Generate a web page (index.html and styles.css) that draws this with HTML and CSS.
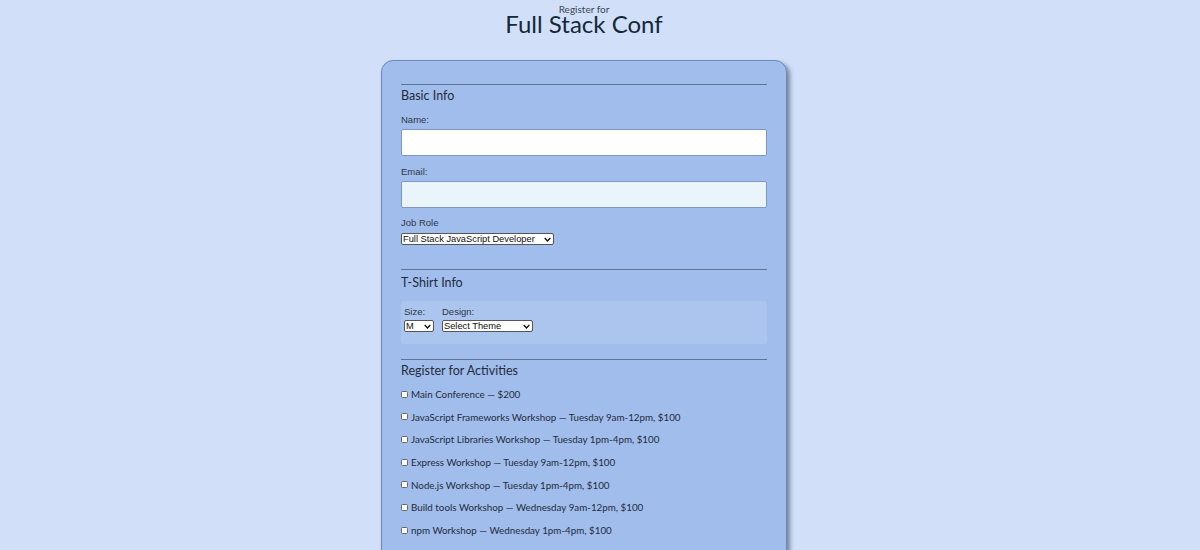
FILE: index.html
```html
<!DOCTYPE html>
<html>
<head>
<meta charset="utf-8">
<link rel="stylesheet" href="styles.css">
</head>
<body>
<header class="header">
  <div class="pre">Register for</div>
  <h1 class="title">Full Stack Conf</h1>
</header>
<form class="card">
  <fieldset class="section">
    <h2 class="legend">Basic Info</h2>
    <label class="lbl" for="name">Name:</label>
    <input class="text" id="name" type="text">
    <label class="lbl" for="mail">Email:</label>
    <input class="text email" id="mail" type="email">
    <label class="lbl" for="title">Job Role</label>
    <span class="selwrap role"><select class="sel" id="title"><option>Full Stack JavaScript Developer</option></select><svg class="chev" viewBox="0 0 10 6"><path d="M1 1l4 4 4-4" fill="none" stroke="#111" stroke-width="2"/></svg></span>
  </fieldset>
  <fieldset class="section shirt">
    <h2 class="legend">T-Shirt Info</h2>
    <div class="shirtbox">
      <div class="col">
        <label class="lbl2">Size:</label>
        <span class="selwrap size"><select class="sel"><option>M</option></select><svg class="chev" viewBox="0 0 10 6"><path d="M1 1l4 4 4-4" fill="none" stroke="#111" stroke-width="2"/></svg></span>
      </div>
      <div class="col">
        <label class="lbl2">Design:</label>
        <span class="selwrap design"><select class="sel"><option>Select Theme</option></select><svg class="chev" viewBox="0 0 10 6"><path d="M1 1l4 4 4-4" fill="none" stroke="#111" stroke-width="2"/></svg></span>
      </div>
    </div>
  </fieldset>
  <fieldset class="section acts">
    <h2 class="legend">Register for Activities</h2>
    <label class="act"><input type="checkbox" class="cb">Main Conference — $200</label>
    <label class="act"><input type="checkbox" class="cb">JavaScript Frameworks Workshop — Tuesday 9am-12pm, $100</label>
    <label class="act"><input type="checkbox" class="cb">JavaScript Libraries Workshop — Tuesday 1pm-4pm, $100</label>
    <label class="act"><input type="checkbox" class="cb">Express Workshop — Tuesday 9am-12pm, $100</label>
    <label class="act"><input type="checkbox" class="cb">Node.js Workshop — Tuesday 1pm-4pm, $100</label>
    <label class="act"><input type="checkbox" class="cb">Build tools Workshop — Wednesday 9am-12pm, $100</label>
    <label class="act"><input type="checkbox" class="cb">npm Workshop — Wednesday 1pm-4pm, $100</label>
  </fieldset>
</form>
</body>
</html>
```
FILE: styles.css
```css
* { box-sizing: border-box; }
body {
  margin: 0;
  padding-right: 32px;
  background: #d1e0f8;
  font-family: Lato, "Noto Sans", sans-serif;
  color: #1c2a3a;
  overflow: hidden;
}
.header {
  text-align: center;
  padding-top: 4px;
}
.pre {
  font-size: 10px;
  line-height: 10px;
  color: #3b4756;
}
.title {
  margin: 0;
  font-weight: 400;
  font-size: 24px;
  line-height: 20px;
  color: #14283a;
}
.card {
  width: 406px;
  margin: 26px auto 0;
  background: #a1bdeb;
  border: 1px solid #6f88b5;
  border-radius: 12px;
  padding: 23px 19px 40px;
  box-shadow: 3px 3px 4px rgba(40, 60, 90, 0.55);
  min-height: 600px;
}
.section {
  border: 0;
  border-top: 1px solid #5e7396;
  margin: 0;
  padding: 0;
  display: flex;
  flex-direction: column;
  align-items: flex-start;
}
.legend {
  margin: 3px 0 0;
  font-size: 12.5px;
  font-weight: 400;
  line-height: 15px;
  color: #1f2c3c;
}
.lbl {
  font-family: "Liberation Sans", Arial, sans-serif;
  font-size: 9.5px;
  line-height: 11px;
  color: #2d3848;
  margin-top: 10px;
}
.legend + .lbl { margin-top: 11px; }
.email + .lbl { margin-top: 9px; }
.text {
  width: 100%;
  height: 27px;
  margin-top: 4px;
  background: #fff;
  border: 1px solid #7e97c6;
  border-radius: 2px;
  font-size: 12px;
}
.text.email { background: #eaf5fb; }
.selwrap {
  position: relative;
  display: block;
  margin-top: 5px;
}
.sel {
  appearance: none;
  -webkit-appearance: none;
  display: block;
  width: 100%;
  font-family: "Liberation Sans", Arial, sans-serif;
  font-size: 9.3px;
  line-height: 10px;
  height: 12px;
  padding: 0 10px 0 1px;
  border: 1px solid #555;
  border-radius: 2px;
  background: #fff;
  color: #111;
}
.chev {
  position: absolute;
  right: 3px;
  top: 3.5px;
  width: 7px;
  height: 5px;
  pointer-events: none;
}
.role { width: 153px; }
.size { width: 30px; }
.design { width: 91px; }
.shirt { margin-top: 24px; }
.shirt .legend { margin-top: 5px; }
.shirtbox {
  margin-top: 11px;
  width: 100%;
  height: 43px;
  background: #abc5ee;
  border-radius: 3px;
  display: flex;
  gap: 8px;
  padding: 5px 3px;
}
.shirtbox .selwrap { margin-top: 3px; }
.col { display: flex; flex-direction: column; align-items: flex-start; }
.lbl2 {
  font-family: "Liberation Sans", Arial, sans-serif;
  font-size: 9.5px;
  line-height: 11px;
  color: #2d3848;
}
.acts { margin-top: 15px; }
.act {
  display: flex;
  align-items: center;
  font-size: 9.8px;
  line-height: 12px;
  color: #1f2c3c;
  margin-top: 10.7px;
}
.acts .legend + .act { margin-top: 10px; }
.cb {
  appearance: none;
  -webkit-appearance: none;
  width: 7px;
  height: 7px;
  margin: 0 3px 0 0;
  background: #fff;
  border: 1px solid #666;
  border-radius: 1.5px;
}
```
